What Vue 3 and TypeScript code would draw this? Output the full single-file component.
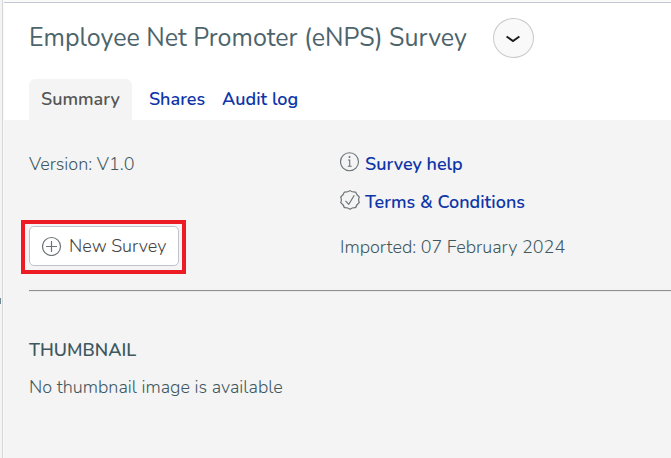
<script setup lang="ts">
import { ref } from 'vue'

interface Tab {
  id: string
  label: string
}

const tabs: Tab[] = [
  { id: 'summary', label: 'Summary' },
  { id: 'shares', label: 'Shares' },
  { id: 'audit', label: 'Audit log' },
]
const active = ref('summary')
</script>

<template>
  <div class="shell">
    <aside class="gutter"><span class="speck"></span></aside>
    <main class="page">
      <header class="head">
        <div class="title-row">
          <h1 class="title">Employee Net Promoter (eNPS) Survey</h1>
          <button class="round" type="button" aria-label="More actions">
            <svg width="16" height="10" viewBox="0 0 16 10" fill="none">
              <path d="M1.600 3.500 L8 8 L14.400 3.500" stroke="#1c1c1c" stroke-width="2" />
            </svg>
          </button>
        </div>
        <nav class="tabs">
          <a
            v-for="tab in tabs"
            :key="tab.id"
            :href="'#' + tab.id"
            class="tab"
            :class="{ active: active === tab.id }"
            @click.prevent="active = tab.id"
          >{{ tab.label }}</a>
        </nav>
      </header>

      <section class="panel">
        <div class="details">
          <div class="column">
            <p class="text">Version: V1.0</p>
            <div class="marked">
              <button class="new" type="button">
                <svg width="20" height="20" viewBox="0 0 20 20" fill="none" stroke="#6c7477" stroke-width="1.2">
                  <circle cx="9.500" cy="10.500" r="9" />
                  <path d="M4 10.500H15M9.500 5V16" />
                </svg>
                New Survey
              </button>
            </div>
          </div>
          <div class="column">
            <div class="links">
              <a class="link" href="#help">
                <svg width="20" height="20" viewBox="0 0 20 20" fill="none" stroke="#6c7477" stroke-width="1.1">
                  <circle cx="9.500" cy="9.800" r="9" />
                  <path d="M8 8H9.700V14M7.800 14.200H11.700" />
                  <circle cx="9.500" cy="5" r="1" fill="#6c7477" stroke="none" />
                </svg>
                Survey help
              </a>
              <a class="link" href="#terms">
                <svg width="20" height="20" viewBox="0 0 20 20" fill="none" stroke="#6c7477" stroke-width="1.2" stroke-linejoin="round">
                  <path d="M10 .6 Q12 2.200 15.700 2.100 Q16.400 4.900 19.300 7 Q18 10 19.300 12.600 Q16.400 14.800 15.700 17.700 Q12.300 17.500 10 19.200 Q7.700 17.500 4.300 17.700 Q3.600 14.800 .7 12.600 Q2 10 .7 7 Q3.600 4.900 4.300 2.100 Q8 2.200 10 .6Z" />
                  <path d="M5.500 10.800L8.800 14.300L14.300 5.300" />
                </svg>
                Terms &amp; Conditions
              </a>
            </div>
            <p class="text imported">Imported: 07 February 2024</p>
          </div>
        </div>
        <hr class="rule" />
        <h2 class="subtitle">THUMBNAIL</h2>
        <p class="text">No thumbnail image is available</p>
      </section>
    </main>
  </div>
</template>

<style>
body {
  margin: 0;
  background: #f4f4f4;
}
</style>

<style scoped>
.shell {
  display: flex;
  min-height: 100vh;
  font: 300 18px/24px Nunito, "Nunito Sans", Lato, sans-serif;
  color: #3f5860;
}
.gutter {
  position: relative;
  flex: none;
  width: 2px;
  background: #f4f4f4;
  border-right: 1px solid #d7d7da;
}
.speck {
  position: absolute;
  left: 0;
  top: 298px;
  width: 1px;
  height: 6px;
  background: #6f8a93;
}
.page {
  flex: 1;
  min-width: 0;
  display: flex;
  flex-direction: column;
  border-top: 2px solid #fafafa;
  border-left: 1px solid #f8f8f8;
}
.head {
  padding: 15px 25px 0;
  background: #fff;
  border-top: 1px solid #c0c9d3;
}
.title-row {
  display: flex;
  align-items: center;
  gap: 26px;
}
.title {
  margin: 0;
  font-size: 25px;
  line-height: 36px;
  font-weight: 400;
  color: #4d646b;
}
.round {
  display: flex;
  flex: none;
  align-items: center;
  justify-content: center;
  width: 41px;
  height: 40px;
  padding: 0;
  border: 1px solid #c9c9c9;
  border-radius: 50%;
  background: #f9f9f9;
}
.tabs {
  display: flex;
  gap: 17px;
  margin-top: 21px;
}
.tab {
  padding: 8px 0 9px;
  font-weight: 600;
  color: #0e35a8;
  text-decoration: none;
}
.tab.active {
  padding: 8px 12px 9px;
  border-radius: 6px 6px 0 0;
  background: #f4f4f4;
  color: #555;
}
.panel {
  flex: 1;
  padding: 32px 0 0 25px;
  background: #f4f4f4;
}
.details {
  display: grid;
  grid-template-columns: minmax(0, 311fr) minmax(0, 331fr);
}
.column {
  display: flex;
  flex-direction: column;
  align-items: flex-start;
  justify-content: space-between;
}
.text {
  margin: 0;
}
.marked {
  position: relative;
  margin-top: 50px;
}
.marked::after {
  content: "";
  position: absolute;
  inset: -6px -7px -8px -8px;
  border: 4px solid #ed1c24;
  pointer-events: none;
}
.new {
  display: flex;
  align-items: center;
  gap: 7px;
  height: 40px;
  padding: 0 12px;
  border: 1px solid #bfc3ce;
  border-radius: 5px;
  background: #fff;
  font: inherit;
  color: #444;
}
.links {
  display: flex;
  flex-direction: column;
  gap: 14px;
}
.link {
  display: flex;
  gap: 5px;
  font-weight: 600;
  color: #0e35a8;
  text-decoration: none;
}
.imported {
  margin-bottom: 7px;
}
.rule {
  height: 1px;
  margin: 24px 0 0;
  border: 0;
  background: #8f8f8f;
  border-bottom: 1px solid #eaeaea;
}
.subtitle {
  margin: 46px 0 13px;
  font-size: 18px;
  line-height: 24px;
  font-weight: 600;
}
</style>
